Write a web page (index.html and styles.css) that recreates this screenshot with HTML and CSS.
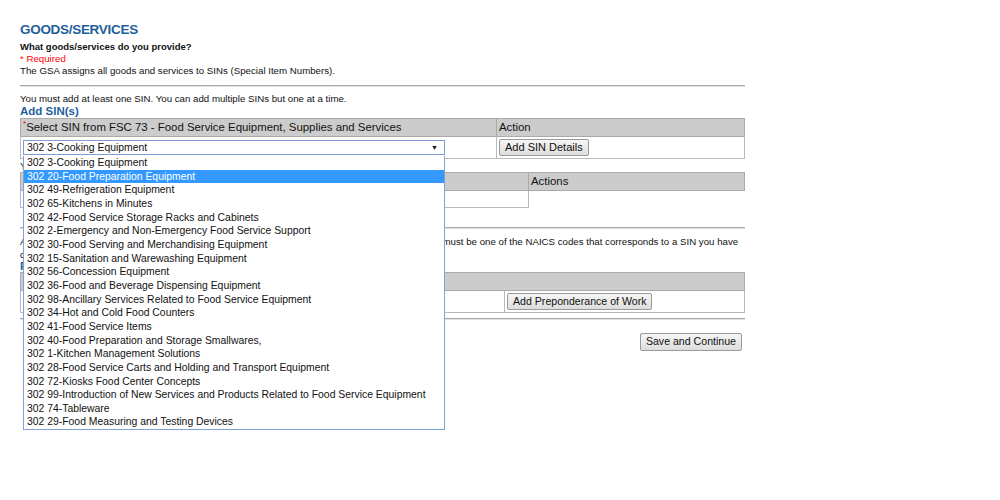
FILE: index.html
```html
<!DOCTYPE html>
<html>
<head>
<meta charset="utf-8">
<title>Goods/Services</title>
<link rel="stylesheet" href="styles.css">
</head>
<body>
<div class="page">
  <h1 class="title">GOODS/SERVICES</h1>
  <p class="question">What goods/services do you provide?</p>
  <p class="required">* Required</p>
  <p class="line">The GSA assigns all goods and services to SINs (Special Item Numbers).</p>
  <div class="rule rule-first"></div>
  <p class="line intro">You must add at least one SIN. You can add multiple SINs but one at a time.</p>
  <h2 class="sub">Add SIN(s)</h2>
  <table class="grid grid-sin">
    <tr>
      <th class="col-sel"><span class="star">*</span>Select SIN from FSC 73 - Food Service Equipment, Supplies and Services</th>
      <th>Action</th>
    </tr>
    <tr>
      <td class="col-sel">
        <div class="select-wrap">
          <div class="select"><span>302 3-Cooking Equipment</span><span class="arrow">&#9660;</span></div>
          <ul class="options">
            <li>302 3-Cooking Equipment</li>
            <li class="hl">302 20-Food Preparation Equipment</li>
            <li>302 49-Refrigeration Equipment</li>
            <li>302 65-Kitchens in Minutes</li>
            <li>302 42-Food Service Storage Racks and Cabinets</li>
            <li>302 2-Emergency and Non-Emergency Food Service Support</li>
            <li>302 30-Food Serving and Merchandising Equipment</li>
            <li>302 15-Sanitation and Warewashing Equipment</li>
            <li>302 56-Concession Equipment</li>
            <li>302 36-Food and Beverage Dispensing Equipment</li>
            <li>302 98-Ancillary Services Related to Food Service Equipment</li>
            <li>302 34-Hot and Cold Food Counters</li>
            <li>302 41-Food Service Items</li>
            <li>302 40-Food Preparation and Storage Smallwares,</li>
            <li>302 1-Kitchen Management Solutions</li>
            <li>302 28-Food Service Carts and Holding and Transport Equipment</li>
            <li>302 72-Kiosks Food Center Concepts</li>
            <li>302 99-Introduction of New Services and Products Related to Food Service Equipment</li>
            <li>302 74-Tableware</li>
            <li>302 29-Food Measuring and Testing Devices</li>
          </ul>
        </div>
      </td>
      <td><button class="btn">Add SIN Details</button></td>
    </tr>
  </table>
  <p class="line sel-label">Your selected SIN(s):</p>
  <table class="grid grid-list">
    <tr>
      <th class="col-list">SIN</th>
      <th>Actions</th>
    </tr>
    <tr>
      <td class="col-list"></td>
      <td class="blank"></td>
    </tr>
  </table>
  <div class="rule rule-second"></div>
  <p class="line para"><span class="nowrap">Any NAICS code which you enter for the Preponderance of Work below (the primary NAICS code) must be one of the NAICS codes that corresponds to a SIN you have</span><br>chosen.</p>
  <h2 class="sub sub-pow">Preponderance of Work</h2>
  <table class="grid grid-pow">
    <tr>
      <th colspan="2">&nbsp;</th>
    </tr>
    <tr>
      <td class="col-pow"></td>
      <td><button class="btn">Add Preponderance of Work</button></td>
    </tr>
  </table>
  <div class="rule rule-third"></div>
  <div class="actions">
    <button class="btn btn-save">Save and Continue</button>
  </div>
</div>
</body>
</html>
```
FILE: styles.css
```css
html, body {
  margin: 0;
  padding: 0;
  background: #ffffff;
}
body {
  font-family: "Liberation Sans", Arial, sans-serif;
  font-size: 9.7px;
  color: #111;
  min-height: 500px;
}
.page {
  width: 725px;
  padding: 22px 0 0 20px;
}
.title {
  margin: 0;
  font-size: 13.5px;
  line-height: 16px;
  font-weight: bold;
  color: #1f5f9c;
  letter-spacing: -0.3px;
}
p {
  margin: 0;
}
.question {
  margin-top: 3px;
  font-weight: bold;
  font-size: 9.5px;
  line-height: 12px;
}
.required {
  color: #ff0000;
  line-height: 12px;
}
.line {
  line-height: 12px;
}
.rule {
  height: 1px;
  background: #a9a9a9;
  border-bottom: 1px solid #e2e2e2;
}
.rule-first {
  margin-top: 8px;
}
.intro {
  margin-top: 6px;
}
.sub {
  margin: 0;
  font-size: 11.5px;
  line-height: 13px;
  font-weight: bold;
  color: #1f5f9c;
}
.grid {
  width: 725px;
  border-collapse: collapse;
  font-size: 11.4px;
}
.grid th {
  background: #cccccc;
  border: 1px solid #aaaaaa;
  font-weight: normal;
  text-align: left;
  height: 17px;
  padding: 0 2px;
  line-height: 17px;
  color: #111;
}
.grid td {
  border: 1px solid #b9b9b9;
  padding: 2px 2px;
  height: 17px;
  vertical-align: top;
}
.col-sel {
  width: 471px;
}
.star {
  color: #e00000;
  font-size: 8px;
  vertical-align: top;
  line-height: 10px;
}
.select-wrap {
  position: relative;
  width: 422px;
}
.select {
  box-sizing: border-box;
  height: 15px;
  margin-top: 1px;
  border: 1px solid #7a9bd4;
  display: flex;
  justify-content: space-between;
  align-items: center;
  padding: 0 6px 0 3px;
  font-size: 10.4px;
  background: #fff;
}
.arrow {
  font-size: 7px;
}
.options {
  position: absolute;
  top: 16px;
  left: 0;
  z-index: 5;
  box-sizing: border-box;
  width: 422px;
  margin: 0;
  padding: 0;
  list-style: none;
  background: #fff;
  border: 1px solid #7fa1d8;
  border-top: none;
  font-size: 10.4px;
}
.options li {
  height: 13.67px;
  line-height: 13.67px;
  padding-left: 3px;
  white-space: nowrap;
  color: #111;
}
.options li.hl {
  background: #3399ff;
  color: #fff;
}
.btn {
  font-family: "Liberation Sans", Arial, sans-serif;
  font-size: 10.6px;
  color: #111;
  height: 17px;
  padding: 0 5px;
  border: 1px solid #9a9a9a;
  border-radius: 2px;
  background: linear-gradient(#f6f6f6, #dddddd);
  line-height: 15px;
}
.grid-sin .btn {
  font-size: 11px;
}
.sel-label {
  line-height: 13px;
}
.col-list {
  width: 503px;
}
.grid-list td {
  height: 12px;
}
.grid-list td.blank {
  border: none;
}
.rule-second {
  margin-top: 19px;
}
.para {
  margin-top: 7px;
  line-height: 12.5px;
}
.nowrap {
  white-space: nowrap;
}
.sub-pow {
  line-height: 10.5px;
}
.col-pow {
  width: 479px;
}
.grid-pow td {
  height: 16px;
  padding-top: 2px;
}
.rule-third {
  margin-top: 5px;
}
.actions {
  display: flex;
  justify-content: flex-end;
  padding-right: 3px;
  margin-top: 13px;
}
.btn-save {
  height: 18px;
}
```
